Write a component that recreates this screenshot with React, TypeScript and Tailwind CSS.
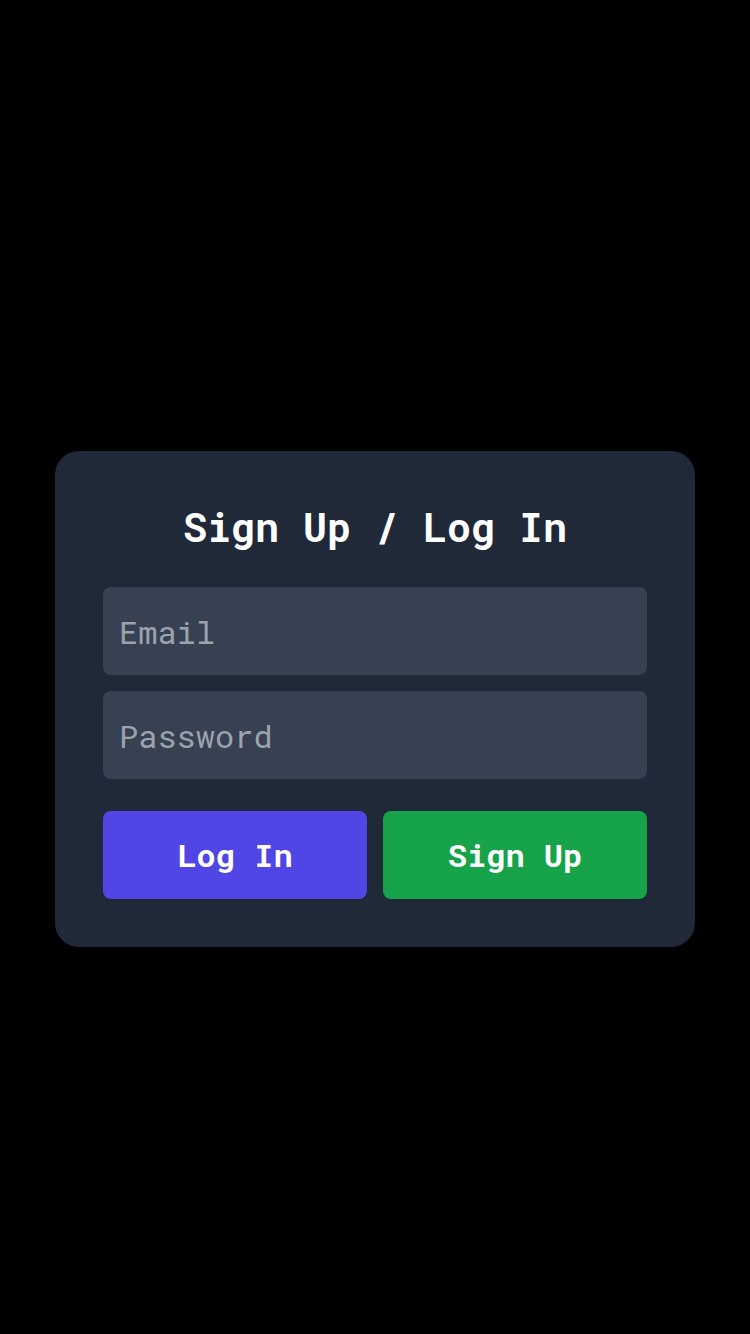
export default function App() {
    return (
        <div className="min-h-screen w-full bg-black flex items-center justify-center pt-16 font-['Roboto_Mono','DejaVu_Sans_Mono',monospace]">
            <div className="w-[640px] bg-[#1f2937] rounded-3xl p-12 flex flex-col">
                <h1 className="text-[40px] leading-[56px] font-bold text-white text-center mb-8">
                    Sign Up / Log In
                </h1>
                <div className="flex flex-col gap-4">
                    <input
                        type="email"
                        placeholder="Email"
                        className="h-[88px] w-full rounded-lg bg-[#374151] px-4 text-[32px] text-white placeholder:text-[#9ca3af] outline-none"
                    />
                    <input
                        type="password"
                        placeholder="Password"
                        className="h-[88px] w-full rounded-lg bg-[#374151] px-4 text-[32px] text-white placeholder:text-[#9ca3af] outline-none"
                    />
                </div>
                <div className="grid grid-cols-2 gap-4 mt-8">
                    <button className="h-[88px] rounded-lg bg-[#4f46e5] text-white text-[32px] font-bold">
                        Log In
                    </button>
                    <button className="h-[88px] rounded-lg bg-[#16a34a] text-white text-[32px] font-bold">
                        Sign Up
                    </button>
                </div>
            </div>
        </div>
    )
}
